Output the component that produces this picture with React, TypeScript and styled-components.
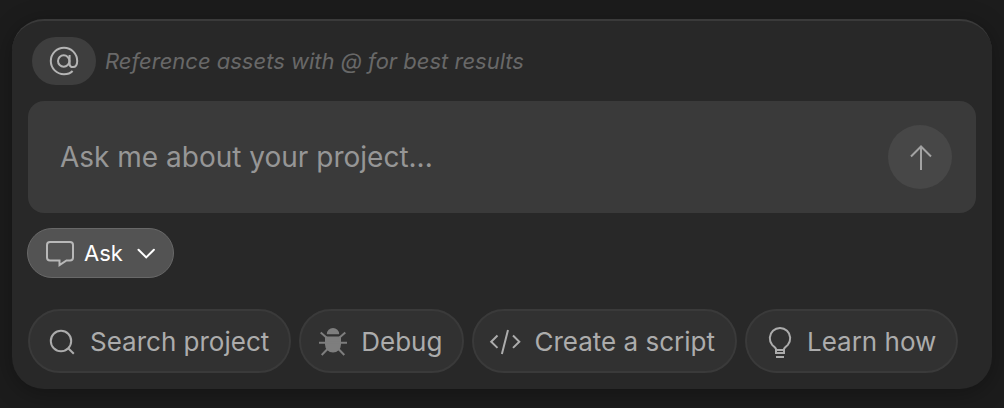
import React from 'react';
import styled, { createGlobalStyle } from 'styled-components';

const GlobalStyle = createGlobalStyle`
  *, *::before, *::after { box-sizing: border-box; }
  body {
    margin: 0;
    background: #1c1c1c;
    font-family: Inter, "Liberation Sans", sans-serif;
  }
  button, input, select { font: inherit; }
`;

const Page = styled.main`
  padding: 19px 12px;
`;

const Panel = styled.section`
  display: flex;
  flex-direction: column;
  align-items: stretch;
  gap: 16px;
  padding: 16px;
  border-top: 2px solid #3a3a3a;
  border-radius: 32px;
  background: #282828;
  box-shadow: 0 4px 24px rgba(0, 0, 0, 0.3);
`;

const HintRow = styled.div`
  display: flex;
  align-items: center;
  gap: 9px;
  padding-left: 4px;
`;

const MentionButton = styled.button`
  display: flex;
  align-items: center;
  justify-content: center;
  width: 64px;
  height: 48px;
  padding: 0;
  border: 0;
  border-radius: 24px;
  background: #3e3e3e;
  color: #b4b4b4;
`;

const Hint = styled.p`
  margin: 0;
  color: #686868;
  font-size: 22px;
  line-height: 28px;
  font-style: italic;
`;

const Prompt = styled.form`
  display: flex;
  align-items: center;
  gap: 16px;
  padding: 24px 24px 24px 32px;
  border-radius: 16px;
  background: #3a3a3a;
`;

const PromptInput = styled.input`
  flex: 1;
  min-width: 0;
  height: 40px;
  padding: 0;
  border: 0;
  outline: 0;
  background: transparent;
  color: #e0e0e0;
  font-size: 28px;
  &::placeholder { color: #969696; opacity: 1; }
`;

const SendButton = styled.button`
  display: flex;
  align-items: center;
  justify-content: center;
  flex: none;
  width: 64px;
  height: 64px;
  padding: 0;
  border: 0;
  border-radius: 50%;
  background: #474747;
  color: #a2a2a2;
`;

/* The outline sits just outside the column edge, so the fill lines up with the prompt. */
const ModePicker = styled.label`
  display: flex;
  align-items: center;
  align-self: flex-start;
  gap: 10px;
  height: 50px;
  margin: -1px;
  padding: 0 17px 0 18px;
  border: 1px solid #686868;
  border-radius: 25px;
  background: #535353;
  color: #b8b8b8;
`;

const ModeSelect = styled.select`
  appearance: none;
  width: 42px;
  height: 32px;
  padding: 0;
  border: 0;
  outline: 0;
  background: transparent;
  color: #ffffff;
  font-size: 22px;
`;

const Chips = styled.div`
  display: flex;
  flex-wrap: wrap;
  gap: 8px;
  padding-top: 16px;
`;

const Chip = styled.button`
  display: flex;
  align-items: center;
  gap: 14px;
  height: 64px;
  padding: 0 20px 0 18px;
  border: 2px solid #3a3a3a;
  border-radius: 32px;
  background: #313131;
  color: #acacac;
  font-size: 26px;
  line-height: 32px;
  white-space: nowrap;
`;

const ChipLabel = styled.span`
  padding-top: 2px;
`;

const Glyph = styled.svg<{ $width?: number; $height?: number; $color?: string }>`
  display: block;
  flex: none;
  width: ${(p) => p.$width ?? 28}px;
  height: ${(p) => p.$height ?? 28}px;
  overflow: visible;
  color: ${(p) => p.$color ?? 'inherit'};
  fill: none;
  stroke: currentColor;
  stroke-width: 2;
`;

const AtIcon = () => (
  <Glyph viewBox="0 0 28 28" aria-hidden="true">
    <circle cx="13.7" cy="14" r="5.7" />
    <path d="M19.6 8v8.4c0 2.4 1.2 3.7 3.4 3.7 2.7 0 4.2-2.3 4.2-6.1A13.2 13.2 0 1 0 14 27.2c3.5 0 6.4-.9 8.6-3.2" />
  </Glyph>
);

const ArrowUpIcon = () => (
  <Glyph viewBox="0 0 28 28" aria-hidden="true">
    <path d="M15 27V3.5M5 13.5l10-10 10 10" />
  </Glyph>
);

const SpeechIcon = () => (
  <Glyph viewBox="0 0 28 28" aria-hidden="true">
    <path d="M4 3h20a3 3 0 0 1 3 3v12.5a3 3 0 0 1-3 3h-3.5l-7 4.7v-4.7H4a3 3 0 0 1-3-3V6a3 3 0 0 1 3-3Z" />
  </Glyph>
);

const ChevronIcon = () => (
  <Glyph viewBox="0 0 20 20" $width={20} $height={20} $color="#fff" aria-hidden="true">
    <path d="m2.500 6.700 7.700 7.700 7.700-7.700" strokeLinecap="round" />
  </Glyph>
);

const SearchIcon = () => (
  <Glyph viewBox="0 0 28 28" aria-hidden="true">
    <circle cx="13" cy="14" r="10.2" />
    <path d="m20.2 21.2 5.6 5.6" />
  </Glyph>
);

const BugIcon = () => (
  <Glyph viewBox="0 0 28 28" $color="#7e7e7e" aria-hidden="true">
    <path d="M7.8 7.2a6.2 6.2 0 0 1 12.4 0Z M6 9.5h16v8a8 8 0 0 1-16 0Z" fill="currentColor" stroke="none" />
    <path d="M1.7 5.5 8 11M26.3 5.5 20 11M0 15.7h28M2.7 28 8.5 22M25.3 28 19.5 22" />
  </Glyph>
);

const CodeIcon = () => (
  <Glyph viewBox="0 0 28 28" aria-hidden="true">
    <path d="m5.5 8.5-6.3 6.2 6.3 6.2M21 8.5l6.3 6.2-6.3 6.2M16 3 9.9 27" />
  </Glyph>
);

const BulbIcon = () => (
  <Glyph viewBox="0 0 28 28" aria-hidden="true">
    <path d="M11 26v-4c-.5-1.700-2.200-2.400-3.800-4.200a10.2 10.2 0 1 1 15.6 0c-1.600 1.800-3.300 2.500-3.800 4.200v4ZM11 23h8M11 30h8" />
  </Glyph>
);

const suggestions = [
  { label: 'Search project', Icon: SearchIcon },
  { label: 'Debug', Icon: BugIcon },
  { label: 'Create a script', Icon: CodeIcon },
  { label: 'Learn how', Icon: BulbIcon },
];

export default function App() {
  return (
    <>
      <GlobalStyle />
      <Page>
        <Panel>
          <HintRow>
            <MentionButton type="button" aria-label="Reference an asset">
              <AtIcon />
            </MentionButton>
            <Hint>Reference assets with @ for best results</Hint>
          </HintRow>
          <Prompt onSubmit={(e) => e.preventDefault()}>
            <PromptInput
              type="text"
              aria-label="Ask me about your project"
              placeholder="Ask me about your project..."
            />
            <SendButton type="submit" aria-label="Send">
              <ArrowUpIcon />
            </SendButton>
          </Prompt>
          <ModePicker>
            <SpeechIcon />
            <ModeSelect aria-label="Mode" defaultValue="ask">
              <option value="ask">Ask</option>
            </ModeSelect>
            <ChevronIcon />
          </ModePicker>
          <Chips>
            {suggestions.map(({ label, Icon }) => (
              <Chip key={label} type="button">
                <Icon />
                <ChipLabel>{label}</ChipLabel>
              </Chip>
            ))}
          </Chips>
        </Panel>
      </Page>
    </>
  );
}
